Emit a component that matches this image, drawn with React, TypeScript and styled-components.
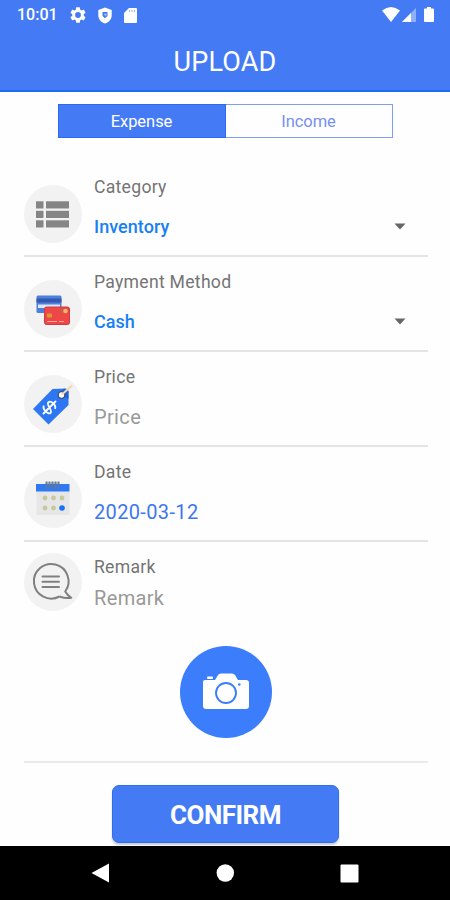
import React from "react";
import styled, { createGlobalStyle } from "styled-components";

const GlobalStyle = createGlobalStyle`
  *, *::before, *::after { box-sizing: border-box; }
  html, body { margin: 0; padding: 0; background: #fff; }
  body { font-family: Roboto, sans-serif; }
  button, input { font: inherit; margin: 0; }
  svg { display: block; flex: none; }
`;

const Screen = styled.div`
  display: flex;
  flex-direction: column;
  width: 450px;
  height: 900px;
  overflow: hidden;
  background: #fefefe;
`;

const Header = styled.header`
  height: 92px;
  flex: none;
  background: #447bf5;
  border-bottom: 2px solid #1c6df2;
  color: #fff;
`;

const StatusBar = styled.div`
  display: flex;
  align-items: center;
  height: 30px;
  padding: 0 15px 0 17px;
`;

const Clock = styled.span`
  width: 53px;
  font-size: 16px;
  font-weight: 500;
  line-height: 30px;
`;

const StatusIcons = styled.div<{ $gap: number; $end?: boolean }>`
  display: flex;
  align-items: center;
  gap: ${(p) => p.$gap}px;
  margin-left: ${(p) => (p.$end ? "auto" : "0")};
`;

const Title = styled.h1`
  margin: 15px 0 0;
  font-size: 27px;
  font-weight: 400;
  line-height: 34px;
  text-align: center;
  letter-spacing: 0.2px;
`;

const Tabs = styled.div`
  display: flex;
  flex: none;
  width: 335px;
  height: 34px;
  margin: 12px 0 24px 58px;
`;

const Tab = styled.button<{ $active?: boolean }>`
  flex: 1;
  padding: 2px 1px 0 0;
  border: 1px solid ${(p) => (p.$active ? "#2a6cf0" : "#7f9ff3")};
  border-left-width: ${(p) => (p.$active ? 1 : 0)}px;
  background: ${(p) => (p.$active ? "#447bf5" : "#fefefe")};
  color: ${(p) => (p.$active ? "#fff" : "#7690f0")};
  font-size: 16.5px;
  letter-spacing: -0.05px;
  line-height: 30px;
`;

const Field = styled.div<{ $compact?: boolean }>`
  display: flex;
  flex: none;
  width: 404px;
  height: ${(p) => (p.$compact ? 88 : 95)}px;
  margin-left: 24px;
  padding-top: ${(p) => (p.$compact ? 13 : 13)}px;
  border-bottom: ${(p) => (p.$compact ? "none" : "2px solid #e4e4e4")};
`;

const Badge = styled.div<{ $compact?: boolean }>`
  display: flex;
  align-items: center;
  justify-content: center;
  flex: none;
  width: 58px;
  height: 58px;
  margin-top: ${(p) => (p.$compact ? -2 : 10)}px;
  border-radius: 50%;
  background: #f2f2f2;
`;

const FieldBody = styled.div<{ $compact?: boolean }>`
  display: flex;
  flex: 1;
  flex-direction: column;
  gap: ${(p) => (p.$compact ? 4 : 13)}px;
  padding: 0 22px 0 12px;
`;

const Label = styled.div`
  height: 24px;
  font-size: 17.6px;
  line-height: 24px;
  letter-spacing: 0.28px;
  color: #747474;
`;

const ValueRow = styled.div`
  display: flex;
  align-items: center;
  justify-content: space-between;
  height: 30px;
`;

const Value = styled.span<{ $tone: Tone }>`
  font-size: ${(p) => (p.$tone === "select" ? 18 : 20)}px;
  font-weight: ${(p) => (p.$tone === "select" ? 500 : 400)};
  line-height: 30px;
  letter-spacing: ${(p) => (p.$tone === "select" ? 0.05 : 0.35)}px;
  color: ${(p) => ({ select: "#1680f5", date: "#3f76ee", hint: "#999" })[p.$tone]};
`;

const PhotoArea = styled.div`
  flex: none;
  display: flex;
  justify-content: center;
  width: 404px;
  height: 133px;
  margin-left: 24px;
  padding: 16px 1px 0 0;
  border-bottom: 2px solid #eaeaea;
`;

const CameraButton = styled.button`
  display: flex;
  align-items: center;
  justify-content: center;
  width: 92px;
  height: 92px;
  padding: 0;
  border: 0;
  border-radius: 50%;
  background: #3b7dfb;
`;

const Footer = styled.div`
  display: flex;
  flex: 1;
  padding: 22px 0 0 112px;
`;

const Confirm = styled.button`
  width: 227px;
  height: 58px;
  padding: 2px 0 0;
  border: 1px solid #2f70ef;
  border-radius: 7px;
  background: #447bf5;
  box-shadow: 0 2px 2px rgba(0, 0, 0, 0.2);
  color: #fff;
  font-size: 26px;
  font-weight: 700;
  letter-spacing: -0.5px;
`;

const NavBar = styled.nav`
  display: flex;
  align-items: center;
  justify-content: space-between;
  flex: none;
  height: 54px;
  padding: 0 91px;
  background: #000;
`;

type Tone = "select" | "date" | "hint";

const GearIcon = () => (
  <svg width="16" height="16" viewBox="2 2 20 20">
    <path
      fill="#fff"
      d="M19.14 12.94c.04-.3.06-.61.06-.94 0-.32-.02-.64-.07-.94l2.03-1.58a.49.49 0 0 0 .12-.61l-1.92-3.32a.49.49 0 0 0-.59-.22l-2.39.96c-.5-.38-1.03-.7-1.62-.94l-.36-2.54a.48.48 0 0 0-.48-.41h-3.84c-.24 0-.43.17-.47.41l-.36 2.54c-.59.24-1.13.57-1.62.94l-2.39-.96a.48.48 0 0 0-.59.22L2.74 8.87c-.12.21-.08.47.12.61l2.03 1.58c-.05.3-.09.63-.09.94s.02.64.07.94l-2.03 1.58a.49.49 0 0 0-.12.61l1.92 3.32c.12.22.37.29.59.22l2.39-.96c.5.38 1.03.7 1.62.94l.36 2.54c.05.24.24.41.48.41h3.84c.24 0 .44-.17.47-.41l.36-2.54c.59-.24 1.13-.56 1.62-.94l2.39.96c.22.08.47 0 .59-.22l1.92-3.32a.47.47 0 0 0-.12-.61zM12 15.6A3.6 3.6 0 1 1 12 8.4a3.6 3.6 0 0 1 0 7.2z"
    />
  </svg>
);

const ShieldIcon = () => (
  <svg width="14" height="17" viewBox="0 0 14 17">
    <path fill="#fff" d="M7 .5 13.7 3v5.200c0 4-2.800 7-6.700 8.300C3.100 15.200.3 12.200.3 8.200V3z" />
    <path fill="#447bf5" d="M4.500 5h5v4L7 11.300 4.500 9z" />
    <circle cx="7.500" cy="7.600" r="1.200" fill="#a9c3fb" />
  </svg>
);

const CardIcon = () => (
  <svg width="13" height="15" viewBox="0 0 13 15">
    <path fill="#fff" d="M5 0h7a1 1 0 0 1 1 1v13a1 1 0 0 1-1 1H1a1 1 0 0 1-1-1V5z" />
    <path stroke="#8fb0fa" d="M5.500 2v2M8 2v2M10.500 2v2" />
  </svg>
);

const SignalIcons = () => (
  <svg width="53" height="18" viewBox="0 0 53 18">
    <path fill="#fff" d="M0 4.500Q9-2.500 18 4.500L9 16z" />
    <path fill="#fff" opacity=".4" d="M34 2v14H20z" />
    <path fill="#fff" d="M29 7v9h-9z" />
    <path fill="#fff" d="M45 1h4v1.500h2a1 1 0 0 1 1 1V15a1 1 0 0 1-1 1h-8a1 1 0 0 1-1-1V3.500a1 1 0 0 1 1-1h2z" />
  </svg>
);

const ListIcon = () => (
  <svg width="58" height="58" viewBox="0 0 58 58" fill="#858585">
    {[16.3, 25.8, 35.3].map((y) => (
      <React.Fragment key={y}>
        <rect x="12" y={y} width="7.500" height="7.200" />
        <rect x="22" y={y} width="23" height="7.200" />
      </React.Fragment>
    ))}
  </svg>
);

const CardsIcon = () => (
  <svg width="58" height="58" viewBox="0 0 58 58">
    <rect x="12.500" y="15.500" width="25" height="17.500" rx="1.500" fill="#4d7fdc" />
    <path fill="#345aaf" d="M12.500 18.500h25v4h-25z" />
    <path fill="#dce7f7" d="M14 24.500h22v3.500H14z" />
    <rect x="20.500" y="27" width="25" height="17.500" rx="2" fill="#ef4748" stroke="#c93c46" />
    <rect x="23" y="33.500" width="5" height="4" rx="1" fill="#d79a35" />
    <path fill="none" stroke="#ffa09b" d="M23 41.500h10M35 41.500h5" />
    <circle cx="38" cy="31" r="2.300" fill="#c4603f" />
    <circle cx="41.500" cy="31" r="2.300" fill="#f1b76b" />
  </svg>
);

const TagIcon = () => (
  <svg width="58" height="58" viewBox="0 0 58 58">
    <path fill="#2e77f3" d="M28.500 14 42 13.500 44.500 16V30L24.500 49.500 9 34z" />
    <path fill="#1e63d8" d="m35 19 5-5.500 4.500 2.500v8z" />
    <circle cx="37.500" cy="20" r="3.300" fill="#fff" stroke="#40547d" strokeWidth="1.300" />
    <path fill="none" stroke="#f3d6af" strokeWidth="2" strokeLinecap="round" d="m38.500 19 9-8" />
    <g fill="none" stroke="#fff" strokeWidth="1.800" strokeLinecap="round" transform="translate(25.500 32.500) rotate(45)">
      <path d="M4.500-3.500C3.500-6-4-6.500-4.500-3S4.500-.5 4.500 3-4 6-5 3.200M0-8.500v17" />
    </g>
  </svg>
);

const CalendarIcon = () => (
  <svg width="58" height="58" viewBox="0 0 58 58">
    <path fill="#e6e6e6" d="M12.500 21h33v24h-33z" />
    <path fill="#2f78f4" d="M12 14h33.500v7.500H12z" />
    <path stroke="#60779b" strokeWidth="1.800" d="M22.500 11.500v7M25.500 11.500v7M28.500 11.500v7M31.500 11.500v7M34.500 11.500v7" />
    <path stroke="#858e9a" d="M21.500 13h14" />
    <g fill="#c8c99b">
      <circle cx="21" cy="28" r="2.400" />
      <circle cx="29.500" cy="28" r="2.400" />
      <circle cx="38" cy="28" r="2.400" />
      <circle cx="21" cy="38" r="2.400" />
      <circle cx="29.500" cy="38" r="2.400" />
    </g>
    <circle cx="38" cy="38" r="2.800" fill="#1772f5" />
  </svg>
);

const RemarkIcon = () => (
  <svg width="58" height="58" viewBox="0 0 58 58" fill="none" stroke="#808080" strokeWidth="2">
    <path strokeLinejoin="round" d="M35.500 43.500A17.300 17.300 0 1 1 41.200 38.500Q43.500 42.500 47.300 44.800 41.500 45.800 35.500 43.500" />
    <path strokeWidth="2" strokeLinecap="round" d="M18.500 23.500H35M18.500 28.800H35M18.500 34H35" />
  </svg>
);

const CameraIcon = () => (
  <svg width="48" height="38" viewBox="0 0 48 38">
    <rect x="5" y="3.500" width="6" height="2.500" rx="1" fill="#fff" />
    <path fill="#fff" d="M3 7h10l3-5Q17 .5 19 .5h11q2 0 3 1.500l3 5h8q3 0 3 3v23q0 3-3 3H4q-3 0-3-3V9q0-2 2-2z" />
    <circle cx="24" cy="20" r="10" fill="none" stroke="#3b7dfb" strokeWidth="1.900" />
    <circle cx="37.300" cy="11.500" r="1.300" fill="#3b7dfb" />
  </svg>
);

const Caret = () => (
  <svg width="12" height="8" viewBox="0 0 12 8">
    <path fill="#666" d="M.5.5h11L6 6.500z" />
  </svg>
);

const fields: { label: string; value: string; tone: Tone; icon: React.ReactNode; compact?: boolean }[] = [
  { label: "Category", value: "Inventory", tone: "select", icon: <ListIcon /> },
  { label: "Payment Method", value: "Cash", tone: "select", icon: <CardsIcon /> },
  { label: "Price", value: "Price", tone: "hint", icon: <TagIcon /> },
  { label: "Date", value: "2020-03-12", tone: "date", icon: <CalendarIcon /> },
  { label: "Remark", value: "Remark", tone: "hint", icon: <RemarkIcon />, compact: true },
];

export default function App() {
  return (
    <Screen>
      <GlobalStyle />
      <Header>
        <StatusBar>
          <Clock>10:01</Clock>
          <StatusIcons $gap={12}>
            <GearIcon />
            <ShieldIcon />
            <CardIcon />
          </StatusIcons>
          <StatusIcons $gap={0} $end>
            <SignalIcons />
          </StatusIcons>
        </StatusBar>
        <Title>UPLOAD</Title>
      </Header>
      <Tabs>
        <Tab $active>Expense</Tab>
        <Tab>Income</Tab>
      </Tabs>
      {fields.map((f) => (
        <Field key={f.label} $compact={f.compact}>
          <Badge $compact={f.compact}>{f.icon}</Badge>
          <FieldBody $compact={f.compact}>
            <Label>{f.label}</Label>
            <ValueRow>
              <Value $tone={f.tone}>{f.value}</Value>
              {f.tone === "select" && <Caret />}
            </ValueRow>
          </FieldBody>
        </Field>
      ))}
      <PhotoArea>
        <CameraButton aria-label="Take photo">
          <CameraIcon />
        </CameraButton>
      </PhotoArea>
      <Footer>
        <Confirm>CONFIRM</Confirm>
      </Footer>
      <NavBar>
        <svg width="18" height="20" viewBox="0 0 18 20">
          <path fill="#fff" d="M18 .5v19L.5 10z" />
        </svg>
        <svg width="18" height="18" viewBox="0 0 18 18">
          <circle cx="9.300" cy="9" r="8.700" fill="#fff" />
        </svg>
        <svg width="19" height="19" viewBox="0 0 19 19">
          <rect x=".5" y=".5" width="18" height="18" rx="1" fill="#fff" />
        </svg>
      </NavBar>
    </Screen>
  );
}
